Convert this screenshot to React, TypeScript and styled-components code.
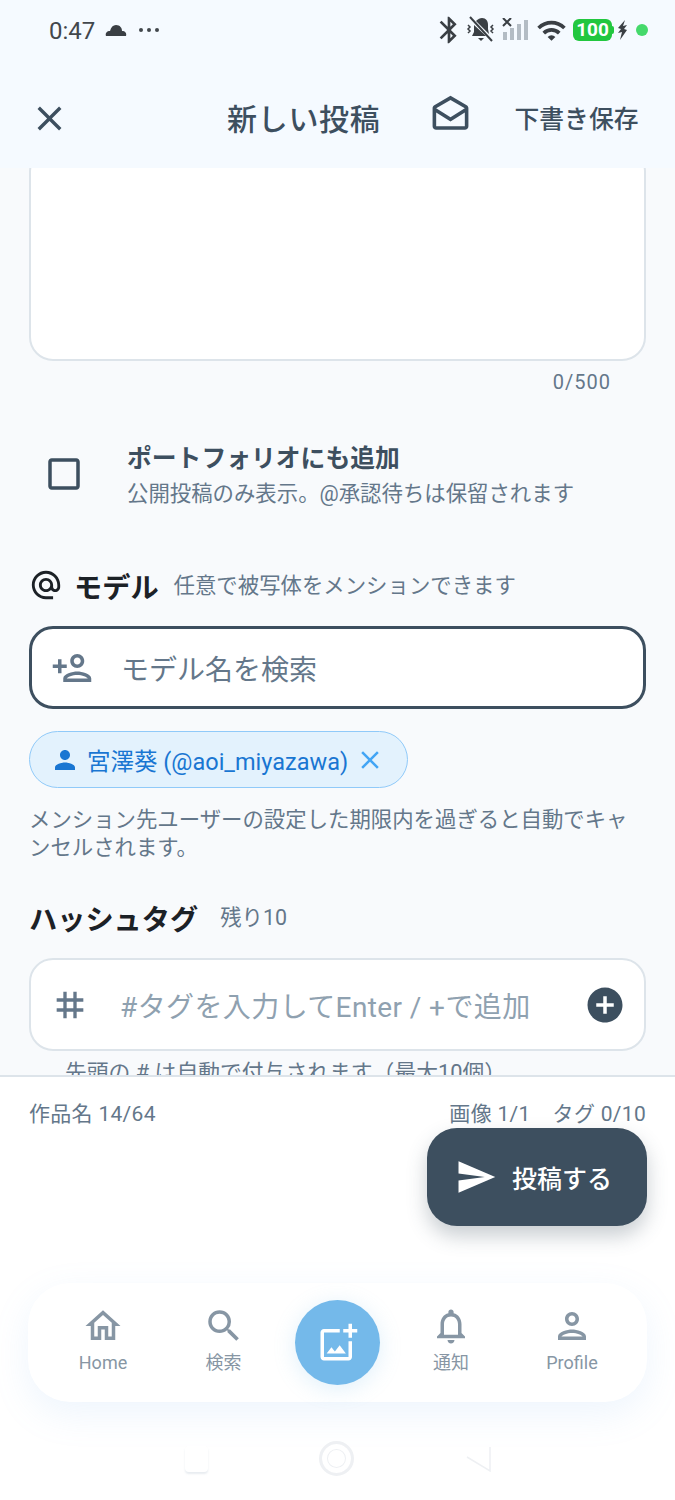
import React from 'react';
import styled, { createGlobalStyle } from 'styled-components';
import {
  MdAddCircle,
  MdAlternateEmail,
  MdBluetooth,
  MdCheckBoxOutlineBlank,
  MdClose,
  MdOutlineAddPhotoAlternate,
  MdOutlineDrafts,
  MdOutlineHome,
  MdOutlineNotifications,
  MdOutlinePerson,
  MdPerson,
  MdPersonAddAlt,
  MdSearch,
  MdSend,
  MdTag,
  MdWifi
} from 'react-icons/md';

const FONT = `Roboto, "Noto Sans CJK JP", sans-serif`;

const GlobalStyle = createGlobalStyle`
  html, body { margin: 0; padding: 0; background: #fff; }
  * { box-sizing: border-box; }
  body { font-family: ${FONT}; }
`;

const Page = styled.div`
  position: relative;
  width: 675px;
  height: 1500px;
  overflow: hidden;
  display: flex;
  flex-direction: column;
  background: #fff;
`;

const Top = styled.header`
  height: 168px;
  flex: none;
  background: #f5faff;
  display: flex;
  flex-direction: column;
  position: relative;
  z-index: 2;
`;

const StatusBar = styled.div`
  height: 60px;
  padding: 0 27px 0 49px;
  display: flex;
  align-items: center;
  justify-content: space-between;
  color: #3a3f44;
`;

const StatusGroup = styled.div`
  display: flex;
  align-items: center;
`;

const Clock = styled.span`
  font-size: 24px;
  margin: 2px 10px 0 0;
  color: #42474c;
`;

const Dots = styled.span`
  display: flex;
  gap: 4px;
  margin-left: 12px;
  span {
    width: 4px;
    height: 4px;
    border-radius: 50%;
    background: #42474c;
  }
`;

const StatusIcon = styled.span<{ $left: number }>`
  display: flex;
  margin-left: ${(p) => p.$left}px;
`;

const Battery = styled.span`
  position: relative;
  width: 39px;
  height: 22px;
  margin: 0 2px 0 6px;
  border-radius: 6px;
  background: #22c73f;
  color: #fff;
  font-size: 19px;
  font-weight: 700;
  line-height: 22px;
  text-align: center;
  &::after {
    content: '';
    position: absolute;
    right: -2px;
    top: 7px;
    width: 2px;
    height: 8px;
    background: #22c73f;
    border-radius: 0 2px 2px 0;
  }
`;

const GreenDot = styled.span`
  width: 12px;
  height: 12px;
  margin-left: 8px;
  border-radius: 50%;
  background: #45d96b;
`;

const AppBar = styled.div`
  height: 108px;
  display: flex;
  align-items: center;
  padding: 5px 36px 0 29px;
  color: #3d4f5f;
`;

const CloseSlot = styled.span`
  display: flex;
  margin-top: 3px;
`;

const Title = styled.h1`
  margin: 0 0 0 157px;
  font-size: 30px;
  font-weight: 500;
  letter-spacing: 0.7px;
  white-space: nowrap;
`;

const EnvelopeSlot = styled.span`
  display: flex;
  margin: -3px 43px 0 48px;
`;

const SaveDraft = styled.span`
  font-size: 24.8px;
  font-weight: 500;
  white-space: nowrap;
`;

const Content = styled.main`
  height: 907px;
  flex: none;
  overflow: hidden;
  background: #f8fafc;
  padding: 0 29px;
`;

const TextCard = styled.div`
  height: 213px;
  margin-top: -20px;
  background: #fff;
  border: 2px solid #dde4ea;
  border-radius: 24px;
`;

const Counter = styled.div`
  margin: 9px 35px 0 0;
  height: 24px;
  line-height: 24px;
  text-align: right;
  font-size: 20px;
  letter-spacing: 1px;
  color: #64778a;
`;

const CheckRow = styled.div`
  display: flex;
  align-items: center;
  margin-top: 47px;
  height: 70px;
`;

const CheckIcon = styled.div`
  width: 98px;
  flex: none;
  display: flex;
  padding-left: 14px;
  margin-bottom: 4px;
  color: #3d4f5f;
`;

const CheckTitle = styled.div`
  font-size: 24.8px;
  font-weight: 700;
  line-height: 35px;
  color: #3d4f5f;
`;

const SubText = styled.div`
  font-size: 21.4px;
  line-height: 35px;
  white-space: nowrap;
  color: #64778a;
`;

const SectionHead = styled.div<{ $top: number }>`
  display: flex;
  align-items: center;
  height: 36px;
  margin-top: ${(p) => p.$top}px;
  color: #1c2126;
`;

const AtIcon = styled.span`
  display: flex;
  margin-right: 11px;
`;

const SectionTitle = styled.h2<{ $gap: number }>`
  margin: 0 ${(p) => p.$gap}px 0 0;
  font-size: 28.2px;
  font-weight: 700;
  white-space: nowrap;
`;

const InputBox = styled.div<{ $focused?: boolean }>`
  display: flex;
  align-items: center;
  background: #fff;
  border: ${(p) => (p.$focused ? '3px solid #3d4f5f' : '2px solid #dde4ea')};
  border-radius: 24px;
  height: ${(p) => (p.$focused ? 83 : 93)}px;
  margin-top: 23px;
  padding-left: 19px;
  color: #64778a;
`;

const InputIcon = styled.span<{ $flip?: boolean }>`
  width: 70px;
  flex: none;
  display: flex;
  svg {
    transform: ${(p) => (p.$flip ? 'scaleX(-1)' : 'none')};
  }
`;

const Placeholder = styled.span<{ $light?: boolean }>`
  font-size: 28px;
  letter-spacing: ${(p) => (p.$light ? '0.4px' : '0')};
  white-space: nowrap;
  color: ${(p) => (p.$light ? '#8fa1b0' : '#64778a')};
`;

const AddButton = styled.span`
  margin-left: auto;
  margin-right: 18px;
  display: flex;
  color: #3d4f5f;
`;

const Chip = styled.div`
  display: inline-flex;
  align-items: center;
  height: 57px;
  margin-top: 22px;
  padding: 0 22px 0 20px;
  background: #e3f2fd;
  border: 1.5px solid #90caf9;
  border-radius: 29px;
  color: #1976d2;
  font-size: 23.5px;
  white-space: nowrap;
`;

const ChipLabel = styled.span`
  margin: 0 7px 0 7px;
`;

const ChipClose = styled.span`
  display: flex;
  color: #42a5f5;
`;

const Note = styled.p`
  margin: 18px 0 0;
  font-size: 21.4px;
  line-height: 28px;
  color: #64778a;
`;

const HashHint = styled.div`
  margin: 8px 0 0 36px;
  font-size: 21.8px;
  line-height: 28px;
  white-space: nowrap;
  color: #64778a;
`;

const Footer = styled.footer`
  height: 425px;
  flex: none;
  background: #fff;
  border-top: 2px solid #dde4ea;
`;

const Stats = styled.div`
  display: flex;
  justify-content: space-between;
  padding: 23px 29px 0;
  font-size: 21px;
  letter-spacing: 0.3px;
  line-height: 28px;
  color: #64778a;
`;

const StatsRight = styled.span`
  display: flex;
  gap: 22px;
`;

const Fab = styled.button`
  position: absolute;
  left: 427px;
  top: 1128px;
  width: 220px;
  height: 98px;
  border: none;
  border-radius: 30px;
  background: #3d4f5f;
  color: #fff;
  display: flex;
  align-items: center;
  padding: 0 0 0 28px;
  gap: 15px;
  font-family: ${FONT};
  font-size: 25px;
  font-weight: 500;
  box-shadow: 0 10px 20px rgba(61, 79, 95, 0.28);
`;

const NavBar = styled.nav`
  width: 619px;
  height: 119px;
  margin: 155px 0 0 28px;
  background: #fff;
  border-radius: 42px;
  box-shadow: 0 12px 36px rgba(120, 180, 240, 0.13);
  display: grid;
  grid-template-columns: 120px 121px 107px 120px 122px;
  padding: 0 15px;
`;

const NavItem = styled.div`
  display: flex;
  flex-direction: column;
  align-items: center;
  padding-top: 22px;
  color: #8796a4;
  font-size: 18px;
  line-height: 24px;
  gap: 4px;
  svg {
    height: 42px;
    flex: none;
  }
`;

const CenterButton = styled.div`
  width: 85px;
  height: 85px;
  margin-top: 17px;
  justify-self: center;
  border-radius: 50%;
  background: #74b9ea;
  color: #fff;
  display: flex;
  align-items: center;
  justify-content: center;
  box-shadow: 0 4px 22px rgba(116, 185, 234, 0.22);
`;

const SystemNav = styled.div`
  display: flex;
  justify-content: center;
  align-items: center;
  gap: 111px;
  margin-top: 39px;
`;

const SysSquare = styled.span`
  width: 23px;
  height: 26px;
  background: #fff;
  border-radius: 4px;
  box-shadow: 0 2px 2px rgba(130, 150, 170, 0.18);
`;

const SysCircle = styled.span`
  width: 35px;
  height: 35px;
  border-radius: 50%;
  border: 3px solid #eef0f3;
  box-shadow: inset 0 0 0 5px #fff, inset 0 0 0 6px #eef0f3;
`;

const navLeft = [
  { label: 'Home', Icon: MdOutlineHome },
  { label: '検索', Icon: MdSearch }
];

const navRight = [
  { label: '通知', Icon: MdOutlineNotifications },
  { label: 'Profile', Icon: MdOutlinePerson }
];

const App = () => {
  return (
    <Page>
      <GlobalStyle />
      <Top>
        <StatusBar>
          <StatusGroup>
            <Clock>0:47</Clock>
            <svg width="22" height="14" viewBox="0 0 22 14" fill="#3a3f44">
              <path d="M1 13c-1-3 1-5 4-5 1-4 3-6 6-6 4 0 6 3 6 6 3 0 5 2 4 5z" />
            </svg>
            <Dots>
              <span />
              <span />
              <span />
            </Dots>
          </StatusGroup>
          <StatusGroup>
            <MdBluetooth size={32} />
            <StatusIcon $left={1}>
              <svg width="30" height="28" viewBox="0 0 30 28" fill="none" stroke="#3a3f44">
                <path
                  d="M10 5c2-2 4-3 6-3 4 0 6 3 6 7v4l1 5zM8 9v7l-2 4h14z"
                  fill="#3a3f44"
                  stroke="none"
                />
                <path d="M12 22h6l-3 3z" fill="#3a3f44" stroke="none" />
                <path d="M4 1l22 24" strokeWidth="2" />
                <path d="M2 9l2 2-2 2 2 2-2 2M27 9l-2 2 2 2-2 2 2 2" strokeWidth="1.5" />
              </svg>
            </StatusIcon>
            <StatusIcon $left={6}>
              <svg width="28" height="24" viewBox="0 0 28 24">
                <rect x="1" y="14" width="4" height="8" fill="#b3bcc4" />
                <rect x="8" y="10" width="4" height="12" fill="#b3bcc4" />
                <rect x="15" y="6" width="4" height="16" fill="#b3bcc4" />
                <rect x="22" y="2" width="4" height="20" fill="#b3bcc4" />
                <path d="M1 0l8 8M9 0L1 8" stroke="#3a3f44" strokeWidth="2" />
              </svg>
            </StatusIcon>
            <StatusIcon $left={6}>
              <MdWifi size={31} />
            </StatusIcon>
            <Battery>100</Battery>
            <StatusIcon $left={2}>
              <svg width="12" height="20" viewBox="0 0 12 20" fill="#3a3f44">
                <path d="M9 0 2 8l3 1-3 4 4-1-2 8 7-10-3-1 3-4-4 1z" />
              </svg>
            </StatusIcon>
            <GreenDot />
          </StatusGroup>
        </StatusBar>
        <AppBar>
          <CloseSlot>
            <MdClose size={41} />
          </CloseSlot>
          <Title>新しい投稿</Title>
          <EnvelopeSlot>
            <MdOutlineDrafts size={43} />
          </EnvelopeSlot>
          <SaveDraft>下書き保存</SaveDraft>
        </AppBar>
      </Top>

      <Content>
        <TextCard />
        <Counter>0/500</Counter>
        <CheckRow>
          <CheckIcon>
            <MdCheckBoxOutlineBlank size={42} />
          </CheckIcon>
          <div>
            <CheckTitle>ポートフォリオにも追加</CheckTitle>
            <SubText>公開投稿のみ表示。@承認待ちは保留されます</SubText>
          </div>
        </CheckRow>
        <SectionHead $top={56}>
          <AtIcon>
            <MdAlternateEmail size={34} />
          </AtIcon>
          <SectionTitle $gap={15}>モデル</SectionTitle>
          <SubText>任意で被写体をメンションできます</SubText>
        </SectionHead>
        <InputBox $focused>
          <InputIcon $flip>
            <MdPersonAddAlt size={42} />
          </InputIcon>
          <Placeholder>モデル名を検索</Placeholder>
        </InputBox>
        <Chip>
          <MdPerson size={30} />
          <ChipLabel>宮澤葵 (@aoi_miyazawa)</ChipLabel>
          <ChipClose>
            <MdClose size={30} />
          </ChipClose>
        </Chip>
        <Note>メンション先ユーザーの設定した期限内を過ぎると自動でキャンセルされます。</Note>
        <SectionHead $top={37}>
          <SectionTitle $gap={22}>ハッシュタグ</SectionTitle>
          <SubText>残り10</SubText>
        </SectionHead>
        <InputBox>
          <InputIcon>
            <MdTag size={40} />
          </InputIcon>
          <Placeholder $light>#タグを入力してEnter / +で追加</Placeholder>
          <AddButton>
            <MdAddCircle size={42} />
          </AddButton>
        </InputBox>
        <HashHint>先頭の # は自動で付与されます（最大10個）</HashHint>
      </Content>

      <Footer>
        <Stats>
          <span>作品名 14/64</span>
          <StatsRight>
            <span>画像 1/1</span>
            <span>タグ 0/10</span>
          </StatsRight>
        </Stats>
        <NavBar>
          {navLeft.map((item) => (
            <NavItem key={item.label}>
              <item.Icon size={42} />
              {item.label}
            </NavItem>
          ))}
          <CenterButton>
            <MdOutlineAddPhotoAlternate size={42} />
          </CenterButton>
          {navRight.map((item) => (
            <NavItem key={item.label}>
              <item.Icon size={42} />
              {item.label}
            </NavItem>
          ))}
        </NavBar>
        <SystemNav>
          <SysSquare />
          <SysCircle />
          <svg width="26" height="28" viewBox="0 0 26 28">
            <path d="M25 2v24L2 12" fill="#fff" stroke="#eef0f3" strokeWidth="1.5" />
          </svg>
        </SystemNav>
      </Footer>

      <Fab>
        <MdSend size={42} />
        投稿する
      </Fab>
    </Page>
  );
};

export default App;
